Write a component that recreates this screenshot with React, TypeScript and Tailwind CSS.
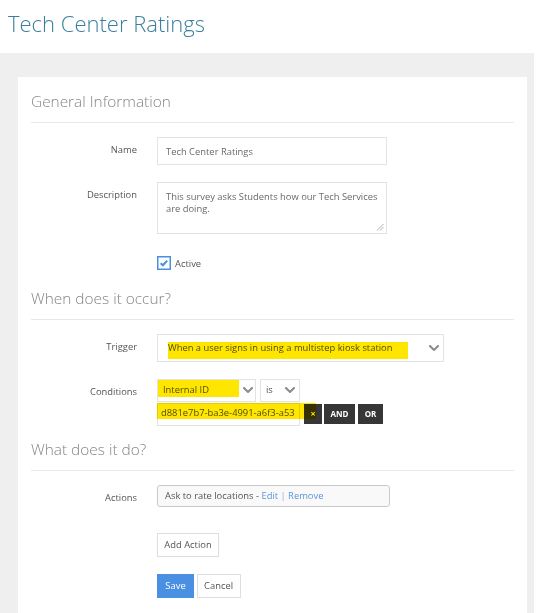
import React from "react";

function Chevron() {
  return (
    <svg width="10" height="6" viewBox="0 0 10 6" className="shrink-0">
      <polyline points="1,1 5,5 9,1" fill="none" stroke="#8a8a8a" strokeWidth="2" strokeLinecap="square" />
    </svg>
  );
}

function Label({ children }: { children: React.ReactNode }) {
  return (
    <div className="w-[106px] shrink-0 pt-[6px] text-right text-[9.4px] leading-[13px] text-[#555]">
      {children}
    </div>
  );
}

function Heading({ children }: { children: React.ReactNode }) {
  return (
    <div className="border-b border-[#e8e8e8] pb-[9px] text-[15.4px] font-light leading-[22px] text-[#858585]">
      {children}
    </div>
  );
}

function Highlight({ className }: { className: string }) {
  return <div className={"pointer-events-none absolute z-10 bg-[#ffe600] mix-blend-multiply " + className} />;
}

export default function App() {
  return (
    <div className="h-[613px] overflow-hidden bg-white font-['Open_Sans',sans-serif]">
      <header className="h-[53px] pl-[8px] pt-[7px]">
        <h1 className="text-[22px] font-light leading-[32px] text-[#3a7f9e]">Tech Center Ratings</h1>
      </header>
      <div className="h-[570px] w-[534px] bg-[#efefef] pl-[18px] pr-[7px] pt-[24px]">
        <div className="h-[560px] bg-white px-[13px] pt-[14px]">
          <Heading>General Information</Heading>

          <div className="mt-[14px] flex gap-[20px]">
            <Label>Name</Label>
            <div className="flex h-[28px] w-[230px] items-center border border-[#e3e3e3] pl-[8px] text-[9.4px] leading-[13px] text-[#6a6a6a]">
              Tech Center Ratings
            </div>
          </div>

          <div className="mt-[17px] flex gap-[20px]">
            <Label>Description</Label>
            <div className="relative h-[52px] w-[230px] border border-[#e3e3e3] pl-[8px] pt-[7.5px] text-[9.4px] leading-[12.5px] text-[#6a6a6a]">
              <div className="whitespace-nowrap">This survey asks Students how our Tech Services</div>
              <div className="whitespace-nowrap">are doing.</div>
              <svg width="8" height="8" viewBox="0 0 8 8" className="absolute bottom-[2px] right-[2px]">
                <line x1="1" y1="7.5" x2="7.5" y2="1" stroke="#9a9a9a" strokeWidth="0.8" />
                <line x1="4" y1="7.5" x2="7.5" y2="4" stroke="#9a9a9a" strokeWidth="0.8" />
              </svg>
            </div>
          </div>

          <div className="mt-[22px] flex items-center gap-[20px]">
            <div className="w-[106px] shrink-0" />
            <div className="flex items-center gap-[4px]">
              <svg width="14" height="14" viewBox="0 0 14 14">
                <rect x="0.75" y="0.75" width="12.5" height="12.5" fill="white" stroke="#4a8fe2" strokeWidth="1.5" />
                <polyline points="3.6,7.2 5.9,9.3 10.2,4.6" fill="none" stroke="#4a8fe2" strokeWidth="2" />
              </svg>
              <span className="text-[9.4px] leading-[13px] text-[#555]">Active</span>
            </div>
          </div>

          <div className="mt-[17.5px]">
            <Heading>When does it occur?</Heading>
          </div>

          <div className="mt-[14px] flex gap-[20px]">
            <Label>Trigger</Label>
            <div className="relative flex h-[28px] w-[287px] items-center justify-between border border-[#e3e3e3] pl-[10px] pr-[4px] text-[9.4px] leading-[13px] text-[#555]">
              <span>When a user signs in using a multistep kiosk station</span>
              <Chevron />
              <Highlight className="left-[9.7px] top-[7px] h-[17px] w-[240px]" />
            </div>
          </div>

          <div className="mt-[17px] flex gap-[20px]">
            <Label>Conditions</Label>
            <div className="flex flex-col gap-[1px]">
              <div className="flex gap-[4px]">
                <div className="relative flex h-[23px] w-[99px] items-center justify-between border border-[#e3e3e3] pl-[5px] pr-[2px] text-[9.4px] leading-[13px] text-[#555]">
                  <span className="relative -top-[1px]">Internal ID</span>
                  <Chevron />
                  <Highlight className="left-0 top-[0.7px] h-[17px] w-[81px]" />
                </div>
                <div className="flex h-[23px] w-[40px] items-center justify-between border border-[#e3e3e3] pl-[5px] pr-[4px] text-[9.4px] leading-[13px] text-[#555]">
                  <span className="relative -top-[1px]">is</span>
                  <Chevron />
                </div>
              </div>
              <div className="relative flex items-start">
                <div className="h-[23.4px] w-[143px] overflow-hidden whitespace-nowrap border border-[#e3e3e3] pl-[3px] pt-[2px] text-[9.4px] leading-[13px] text-[#555]">
                  d881e7b7-ba3e-4991-a6f3-a53
                </div>
                <div className="ml-[4px] mt-[1px] flex h-[20px] w-[18px] items-center justify-center bg-[#363636] text-[9px] font-bold leading-none text-white">
                  ×
                </div>
                <div className="ml-[2px] mt-[1px] flex h-[20px] w-[31px] items-center justify-center bg-[#363636] text-[8px] font-bold leading-none text-white">
                  AND
                </div>
                <div className="ml-[3px] mt-[1px] flex h-[20px] w-[25px] items-center justify-center bg-[#363636] text-[8px] font-bold leading-none text-white">
                  OR
                </div>
                <Highlight className="left-0 top-0 h-[16px] w-[159.4px]" />
              </div>
            </div>
          </div>

          <div className="mt-[13px]">
            <Heading>What does it do?</Heading>
          </div>

          <div className="mt-[14px] flex gap-[20px]">
            <Label>Actions</Label>
            <div className="flex h-[22px] w-[233px] items-center rounded-[3px] border border-[#c9c9c9] bg-[#f9f9f9] pl-[7px] text-[9.4px] leading-[13px] text-[#555]">
              <span className="whitespace-pre">Ask to rate locations - </span>
              <span className="text-[#5d93dc]">Edit</span>
              <span className="whitespace-pre text-[#8fb0dd]"> | </span>
              <span className="text-[#5d93dc]">Remove</span>
            </div>
          </div>

          <div className="mt-[26px] flex gap-[20px]">
            <div className="w-[106px] shrink-0" />
            <div className="flex h-[24px] w-[62px] items-center justify-center border border-[#dedede] bg-white text-[9.4px] leading-[13px] text-[#555]">
              Add Action
            </div>
          </div>

          <div className="mt-[17px] flex gap-[20px]">
            <div className="w-[106px] shrink-0" />
            <div className="flex gap-[2.6px]">
              <div className="flex h-[24px] w-[37px] items-center justify-center bg-[#4a90e2] text-[9.4px] leading-[13px] text-white">
                Save
              </div>
              <div className="flex h-[24px] w-[44px] items-center justify-center border border-[#dedede] bg-white text-[9.4px] leading-[13px] text-[#555]">
                Cancel
              </div>
            </div>
          </div>
        </div>
      </div>
    </div>
  );
}
